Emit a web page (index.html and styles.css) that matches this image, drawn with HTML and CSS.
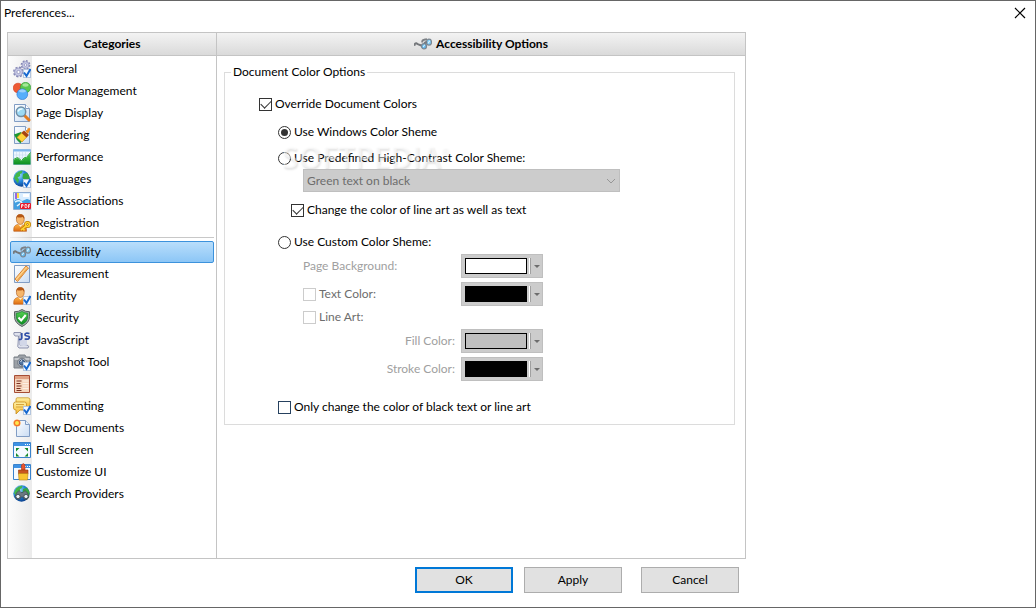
FILE: index.html
```html
<!DOCTYPE html>
<html lang="en">
<head>
<meta charset="utf-8">
<title>Preferences</title>
<link rel="stylesheet" href="styles.css">
</head>
<body>
<svg class="defs" width="0" height="0" aria-hidden="true">
  <defs>
    <linearGradient id="g-page" x1="0" y1="0" x2="1" y2="1"><stop offset="0" stop-color="#ffffff"/><stop offset="1" stop-color="#c9dcf3"/></linearGradient>
    <linearGradient id="g-orange" x1="0" y1="0" x2="0" y2="1"><stop offset="0" stop-color="#ffb648"/><stop offset="1" stop-color="#dc6a10"/></linearGradient>
    <linearGradient id="g-yellow" x1="0" y1="0" x2="0" y2="1"><stop offset="0" stop-color="#fff3a8"/><stop offset="1" stop-color="#f4b52c"/></linearGradient>
    <linearGradient id="g-green" x1="0" y1="0" x2="0" y2="1"><stop offset="0" stop-color="#55cf52"/><stop offset="1" stop-color="#0c8d20"/></linearGradient>
    <radialGradient id="g-globe" cx=".35" cy=".3" r=".75"><stop offset="0" stop-color="#9fe0ff"/><stop offset=".5" stop-color="#2787dc"/><stop offset="1" stop-color="#083b88"/></radialGradient>
    <symbol id="tick" viewBox="0 0 18 18"><rect x="10.500" y="9.500" width="7" height="8" fill="#f4f9ff" stroke="#b3c5dd"/><path d="M11 12.500l2.500 3.500L17.500 9" fill="none" stroke="#1668cf" stroke-width="2"/></symbol>
    <symbol id="page" viewBox="0 0 18 18"><path d="M1.500.5h11l4 4v13h-15z" fill="url(#g-page)" stroke="#819dc4"/><path d="M12.500.5v4h4" fill="#fff" stroke="#819dc4"/></symbol>
    <symbol id="globe" viewBox="0 0 18 18"><circle cx="8.500" cy="8.500" r="8.200" fill="url(#g-globe)"/><path d="M3 3.500Q6 .5 9.500.8l-.7 2.400L7 4l.2 2-2.700 1.500L6 9.500l-1 4L2.500 10 1 8z" fill="#43b649"/><path d="M10 4l4-1.300 2.500 4-.6 5-2.400 3-2-1.500.2-3.200L9.500 8z" fill="#36a841"/></symbol>
    <symbol id="person" viewBox="0 0 18 18"><path d="M.8 17.300c-.5-4.500 1-6.500 5.200-7.100l3 .3c3 .5 4.800 2.500 4.500 6.800z" fill="url(#g-orange)" stroke="#b85a16" stroke-width=".6"/><path d="M5 10l2.500 3L10 10z" fill="#fff1cf"/><ellipse cx="7.300" cy="5.400" rx="3.900" ry="5" fill="#f6b66a" stroke="#a9591c" stroke-width=".6"/><path d="M3.300 5Q2.800.4 7.200.3 12 .4 11.300 5L9.700 3Q6 4.200 4.300 3z" fill="#b45715"/></symbol>
    <symbol id="glasses" viewBox="0 0 18 18"><path d="M.8 10Q.6 8.200 2.300 8.300l2 1 3 1.200" fill="none" stroke="#74777b" stroke-width="1.900" stroke-linecap="round"/><path d="M8.300 7.500Q8 5 10 4.800l3-.6" fill="none" stroke="#7c8085" stroke-width="2"/><ellipse cx="10" cy="11.300" rx="2.500" ry="2.700" fill="#62baf0" stroke="#7c8690" stroke-width="1.200"/><ellipse cx="15" cy="7.200" rx="2.500" ry="3" fill="#7ccbf7" stroke="#7c8690" stroke-width="1.200"/><path d="M9.200 12l1.500-2.200M14.200 8.200l1.500-2.500" stroke="#dff5ff" stroke-width="1.100"/><path d="M10.300 8.300l2.500-1.500" stroke="#757b82" stroke-width="2.200"/></symbol>
    <symbol id="window" viewBox="0 0 18 18"><path d="M.5 1.500h17v15H.5z" fill="#f5faff" stroke="#3a83cc"/><path d="M1 2h16v3H1z" fill="#3e92e4"/><path d="M12 3.500h1m1 0h1m1 0h1" stroke="#fff"/></symbol>
  </defs>
</svg>

<div class="window">
  <header class="titlebar">
    <span class="title">Preferences...</span>
    <button class="close" type="button" aria-label="Close"><svg width="12" height="12" viewBox="0 0 12 12"><path d="M1 1l10 10M11 1L1 11" stroke="#000" stroke-width="1.200"/></svg></button>
  </header>

  <main class="content">
    <div class="panels">
      <nav class="categories" aria-label="Categories">
        <h2 class="panel-head">Categories</h2>
        <div class="category-list">
          <a class="item" href="#general"><svg class="icon" viewBox="0 0 18 18"><g fill="none" stroke="#8587b5"><circle cx="12.500" cy="5" r="3.900" stroke-width="2" stroke-dasharray="1.700 1.350"/><circle cx="5.500" cy="12" r="4.500" stroke-width="2" stroke-dasharray="2 1.530"/></g><g fill="#c8cae6" stroke="#9193bf" stroke-width=".7"><circle cx="12.500" cy="5" r="3.400"/><circle cx="5.500" cy="12" r="4"/></g><g fill="#fff" stroke="#8587b5" stroke-width=".7"><circle cx="12.500" cy="5" r="1.300"/><circle cx="5.500" cy="12" r="1.600"/></g><use href="#tick"/></svg>General</a>
          <a class="item" href="#color"><svg class="icon" viewBox="0 0 18 18"><circle cx="5" cy="6" r="4.800" fill="#ee5a34" stroke="#d23c1b" stroke-width=".6"/><circle cx="12.500" cy="5.500" r="5.200" fill="#5bc84f" stroke="#2d9a2f" stroke-width=".6"/><circle cx="9.300" cy="12.200" r="5.400" fill="#55aefb" stroke="#2371cf" stroke-width=".6"/><path d="M5.200 9Q9 5.300 13.500 9q-3.500 3-8.300 0z" fill="#b8e0fb" opacity=".7"/><ellipse cx="12.500" cy="3" rx="3" ry="1.700" fill="#c5f3b7" opacity=".7"/></svg>Color Management</a>
          <a class="item" href="#display"><svg class="icon" viewBox="0 0 18 18"><use href="#page"/><path d="M11 11l5 5" stroke="#e27a20" stroke-width="3" stroke-linecap="round"/><circle cx="8" cy="7.800" r="4.700" fill="#9cdaf6" stroke="#708da5" stroke-width="1.500"/><path d="M5 7.500Q6 4.500 9.500 5" fill="none" stroke="#effbff" stroke-width="1.500"/></svg>Page Display</a>
          <a class="item" href="#rendering"><svg class="icon" viewBox="0 0 18 18"><use href="#page"/><path d="M1 8.500L8 6l3 5-3.500 6.500Q3 14 1 8.500z" fill="#1b9831"/><path d="M4 11.500L9.500 6l4.700 4.500L9 16z" fill="#ffd33a" stroke="#d48b14" stroke-width=".7"/><path d="M8.500 7L11 4.500 16 9l-2.500 2.500z" fill="#a64413"/><path d="M12.500 5.500L16 1.500l1.500 1.500L15 8z" fill="#ef8a1d"/></svg>Rendering</a>
          <a class="item" href="#performance"><svg class="icon" viewBox="0 0 18 18"><path d="M.5 1.500h17v15H.5z" fill="#edf6ff" stroke="#9cbfe5"/><path d="M.5 1.500h17v2H.5z" fill="#7fb7ed"/><path d="M3.500 4v12M6.500 4v12M9.500 4v12M12.500 4v12M1 7h16M1 10h16" stroke="#c6daee" stroke-width=".6"/><path d="M.5 12l4-2 4 3 3-3 2 0L17.500 5v11.500H.5z" fill="url(#g-green)"/><path d="M.5 11.500l4-2 4 3 3-3h2l4-5" fill="none" stroke="#35a83b"/></svg>Performance</a>
          <a class="item" href="#languages"><svg class="icon" viewBox="0 0 18 18"><use href="#globe"/><use href="#tick"/></svg>Languages</a>
          <a class="item" href="#files"><svg class="icon" viewBox="0 0 18 18"><path d="M.5.5h17v17H.5z" fill="#d9edff" stroke="#8cabd1"/><path d="M3 1v6" stroke="#9a69dc" stroke-width="2"/><path d="M5 1v5" stroke="#ffde3f" stroke-width="2"/><path d="M10 2h6v3h-6z" fill="#fff"/><path d="M1 9q4-4 8 0l5-2 3 1v9H1z" fill="#419ee0"/><path d="M2 10q5-3 7 1M4 14l4-3" stroke="#e8f8ff" stroke-width="1.500" fill="none"/><rect x="7" y="11" width="11" height="6" rx="1" fill="#e7192c"/><path d="M8.500 16v-3.500h1.500V14H8.500M12 12.500v3h1.500l.5-1-.5-2zM15.500 16v-3.500H17M15.500 14H17" fill="none" stroke="#fff" stroke-width=".8"/></svg>File Associations</a>
          <a class="item" href="#registration"><svg class="icon" viewBox="0 0 18 18"><use href="#person"/><g fill="none" stroke="#b87600" stroke-width="3"><circle cx="14.500" cy="10.500" r="2"/><path d="M13 12l-5 4"/></g><g fill="none" stroke="#ffd130" stroke-width="1.700"><circle cx="14.500" cy="10.500" r="2"/><path d="M13 12l-5 4m2-1.500l1.500 2"/></g></svg>Registration</a>
          <hr class="divider">
          <a class="item selected" href="#accessibility" aria-current="page"><svg class="icon" viewBox="0 0 18 18"><use href="#glasses"/></svg>Accessibility</a>
          <a class="item" href="#measurement"><svg class="icon" viewBox="0 0 18 18"><path d="M1.500.5h15v17h-15z" fill="url(#g-page)" stroke="#819dc4"/><path d="M2 14L13 1l2.500 2L4.500 16.500z" fill="#ffcf85" stroke="#d98532"/><path d="M4.500 15L14 3.500" stroke="#e59b48"/></svg>Measurement</a>
          <a class="item" href="#identity"><svg class="icon" viewBox="0 0 18 18"><use href="#person"/><use href="#tick"/></svg>Identity</a>
          <a class="item" href="#security"><svg class="icon" viewBox="0 0 18 18"><path d="M9 .5q3.500 2.500 7.500 2.200v5Q16.500 14 9 17.500 1.500 14 1.500 7.700v-5Q5.500 3 9 .5z" fill="#9ea8a6" stroke="#596462"/><path d="M9 2.500q3 1.800 5.700 1.800v3.800Q14.700 12.700 9 15.500 3.300 12.700 3.300 8.100V4.300Q6 4.300 9 2.500z" fill="url(#g-green)" stroke="#087f24" stroke-width=".6"/><path d="M5.500 8.500l2.700 3 4.500-5.500" fill="none" stroke="#fff" stroke-width="2"/></svg>Security</a>
          <a class="item" href="#javascript"><svg class="icon" viewBox="0 0 18 18"><path d="M1 1.500h7L7 5v9q4-1 7 0 3 1 1 3H6q-2-1-1-4l.5-8H2q-2-2-1-3.500z" fill="#dfe2ed" stroke="#777d9e" stroke-width=".8"/><path d="M7 9h7v5q-3 1-7 0z" fill="#d2d7e8"/><path d="M8.800 2v5q0 2-3 1.300M16.500 2.500q-4.500-1-4.500 1 0 1.300 2.200 1.500 2.300.2 2.100 1.700-.1 2.100-4.700 1.300" fill="none" stroke="#304fa8" stroke-width="1.700"/></svg>JavaScript</a>
          <a class="item" href="#snapshot"><svg class="icon" viewBox="0 0 18 18"><path d="M1 4h4l1-2h6l1 2h4v11H1z" fill="#9ba0a6" stroke="#7b8087"/><path d="M1.500 5h15v2h-15z" fill="#c6c9cd"/><circle cx="9" cy="9.500" r="4.300" fill="#c9ced5" stroke="#6a717b"/><circle cx="9" cy="9.500" r="2.700" fill="#5275a2" stroke="#3c5273"/><path d="M7.500 8.500l1.500-1" stroke="#fff"/><use href="#tick"/></svg>Snapshot Tool</a>
          <a class="item" href="#forms"><svg class="icon" viewBox="0 0 18 18"><path d="M1.500.5h15v17h-15z" fill="#f6d5bd" stroke="#a64d35"/><path d="M2 1h14v3H2z" fill="#e0a183"/><path d="M3.500 6h5M3.500 8.500h4M3.500 11h5M3.500 13.500h4M3.500 15.500h5" stroke="#7a3021"/><path d="M9.500 6h6M9.500 8.500h6M9.500 11h6M9.500 13.500h6" stroke="#fdf0e6"/></svg>Forms</a>
          <a class="item" href="#commenting"><svg class="icon" viewBox="0 0 18 18"><path d="M4 .8h11q2 0 2 2v5q0 2-2 2H6q-3 0-3-2v-5q0-2 1-2z" fill="url(#g-yellow)" stroke="#c79324" stroke-width=".8"/><path d="M2.500 5h9q2 0 2 2v4q0 2-2 2H7l-4 4v-4q-2.500 0-2.500-2V7q0-2 2-2z" fill="url(#g-yellow)" stroke="#c58e20" stroke-width=".8"/><path d="M3 7.500h8M3 10h7" stroke="#d6a43b"/><use href="#tick"/></svg>Commenting</a>
          <a class="item" href="#newdocs"><svg class="icon" viewBox="0 0 18 18"><path d="M3.500 1.500h9l4 4v12h-13z" fill="url(#g-page)" stroke="#819dc4"/><path d="M12.500 1.500v4h4" fill="#e8f1fc" stroke="#819dc4"/><circle cx="4" cy="4" r="3.600" fill="#fbb25c"/><circle cx="4" cy="4" r="2.600" fill="#ffe84d" stroke="#f4702a" stroke-width="1.200"/></svg>New Documents</a>
          <a class="item" href="#fullscreen"><svg class="icon" viewBox="0 0 18 18"><use href="#window"/><path d="M3 7h3.500L3 10.500zM15 7h-3.500l3.500 3.500zM3 15.500h3.500L3 12zM15 15.500h-3.500L15 12z" fill="#178b2b"/></svg>Full Screen</a>
          <a class="item" href="#customize"><svg class="icon" viewBox="0 0 18 18"><use href="#window"/><path d="M8.500 7V2q2-3 3.500 0v5z" fill="#e7552d" stroke="#b23317" stroke-width=".6"/><path d="M5.500 7h9.500v4H5.500z" fill="#c95620" stroke="#93370f" stroke-width=".6"/><path d="M5.500 10.500h9.500l-.5 6.500H6z" fill="#f8c531" stroke="#b78315" stroke-width=".6"/></svg>Customize UI</a>
          <a class="item" href="#search"><svg class="icon" viewBox="0 0 18 18"><use href="#globe"/><path d="M3.500 8L6 5.500 8 7.500h2l2-2L14.500 8l1.500 4-2 2.500-3-.5-1-2H8l-1 2-3 .5L2 12z" fill="#6b7881" stroke="#39444c" stroke-width=".6"/><circle cx="5" cy="11.500" r="2.100" fill="#eef4f8" stroke="#39444c" stroke-width=".8"/><circle cx="13" cy="11.500" r="2.100" fill="#eef4f8" stroke="#39444c" stroke-width=".8"/></svg>Search Providers</a>
        </div>
      </nav>

      <section class="options">
        <h2 class="panel-head"><svg class="icon" viewBox="0 0 18 18"><use href="#glasses"/></svg>Accessibility Options</h2>
        <fieldset class="group">
          <legend>Document Color Options</legend>
          <div class="row first"><label class="choice"><input type="checkbox" checked>Override Document Colors</label></div>
          <div class="scheme">
            <div class="row"><label class="choice"><input type="radio" name="scheme" checked>Use Windows Color Sheme</label></div>
            <div class="row predefined">
              <label class="choice"><input type="radio" name="scheme">Use Predefined High-Contrast Color Sheme:</label>
              <span class="watermark" aria-hidden="true">SOFTPEDIA<small>®</small></span>
            </div>
            <div class="preset">
              <select aria-label="Predefined color scheme" disabled><option>Green text on black</option></select>
              <svg class="chevron" width="10" height="6" viewBox="0 0 10 6"><path d="M1 1l4 4 4-4" fill="none" stroke="#969696"/></svg>
            </div>
            <div class="row line-art"><label class="choice"><input type="checkbox" checked>Change the color of line art as well as text</label></div>
            <div class="row custom"><label class="choice"><input type="radio" name="scheme">Use Custom Color Sheme:</label></div>
            <div class="colors">
              <label class="dim" for="c-page">Page Background:</label>
              <button id="c-page" class="color" type="button" disabled><span class="swatch white"></span><span class="arrow"></span></button>
              <label class="choice off"><input type="checkbox" disabled>Text Color:</label>
              <button class="color" type="button" aria-label="Text color" disabled><span class="swatch black"></span><span class="arrow"></span></button>
            </div>
            <div class="art-label"><label class="choice off"><input type="checkbox" disabled>Line Art:</label></div>
            <div class="colors">
              <label class="dim end" for="c-fill">Fill Color:</label>
              <button id="c-fill" class="color" type="button" disabled><span class="swatch gray"></span><span class="arrow"></span></button>
              <label class="dim end" for="c-stroke">Stroke Color:</label>
              <button id="c-stroke" class="color" type="button" disabled><span class="swatch black"></span><span class="arrow"></span></button>
            </div>
            <div class="row only"><label class="choice"><input class="focus" type="checkbox">Only change the color of black text or line art</label></div>
          </div>
        </fieldset>
      </section>
    </div>

    <footer class="actions">
      <button class="btn primary" type="button">OK</button>
      <button class="btn" type="button">Apply</button>
      <button class="btn cancel" type="button">Cancel</button>
    </footer>
  </main>
</div>
</body>
</html>
```
FILE: styles.css
```css
* { box-sizing: border-box; }

body {
  margin: 0;
  background: #fff;
  color: #000;
  font: 12px/16px Lato, "Open Sans", sans-serif;
}

button, select, input { font: inherit; color: inherit; margin: 0; }
.defs { position: absolute; }

.window {
  min-height: 100vh;
  border: 1px solid #666;
}

.titlebar {
  display: flex;
  justify-content: space-between;
  align-items: center;
  height: 24px;
  padding: 0 9px 0 3px;
}
.close { display: flex; padding: 0; border: 0; background: none; }

.content { max-width: 745px; padding: 7px 0 0 6px; }

.panels {
  display: flex;
  min-height: 527px;
  border: 1px solid #c4c4c4;
}
.categories {
  flex: 0 0 209px;
  display: flex;
  flex-direction: column;
  border-right: 1px solid #c4c4c4;
}
.options { flex: 1; }

.panel-head {
  display: flex;
  justify-content: center;
  align-items: center;
  gap: 4px;
  height: 23px;
  margin: 0;
  border-bottom: 1px solid #c4c4c4;
  background: linear-gradient(#f3f3f3, #dadada);
  font-size: 12px;
}

.category-list {
  flex: 1;
  padding: 2px;
  background: linear-gradient(90deg, #fcfcfc, #ebebeb) 0 0 / 24px 100% no-repeat;
}
.item {
  display: flex;
  align-items: center;
  gap: 5px;
  height: 22px;
  padding: 0 3px;
  color: #000;
  text-decoration: none;
}
.icon { flex: none; width: 18px; height: 18px; }
.selected {
  padding: 0 2px;
  border: 1px solid #3c92dc;
  border-radius: 2px;
  background: linear-gradient(#b9defb, #8cc6f6);
}
.divider {
  height: 1px;
  margin: 3px 0;
  border: 0;
  background: linear-gradient(90deg, #eee, #c8c8c8 24px);
}

.group {
  margin: 8px 10px 0 7px;
  padding: 0 8px 6px 34px;
  border: 1px solid #dcdcdc;
}
.group legend { margin-left: -28px; padding: 0 2px; }

.row { display: flex; align-items: center; height: 22px; }
.first { margin: 13px 0 6px; }
.scheme { padding-left: 19px; }
.choice { display: inline-flex; align-items: center; gap: 3px; }

input {
  appearance: none;
  display: grid;
  place-content: center;
  width: 13px;
  height: 13px;
  border: 1px solid #333;
  background: #fff;
}
input[type="radio"] { border-radius: 50%; }
input[type="radio"]:checked::after {
  content: "";
  width: 7px;
  height: 7px;
  border-radius: 50%;
  background: #333;
}
input[type="checkbox"]:checked::after {
  content: "";
  width: 9px;
  height: 5px;
  margin-bottom: 3px;
  border: solid #333;
  border-width: 0 0 1px 1px;
  transform: rotate(-45deg);
}
input:disabled { border-color: #ccc; }
input.focus { border-color: #26415f; }

.predefined { position: relative; margin-top: 4px; }
.watermark {
  position: absolute;
  left: 4px;
  top: -2px;
  color: rgb(255 255 255 / 50%);
  font: 600 30px/24px "Open Sans", sans-serif;
  text-shadow: 1px 2px 2px rgb(0 0 0 / 10%);
  pointer-events: none;
}
.watermark small { font-size: 9px; vertical-align: 14px; line-height: 9px; }

.preset { position: relative; width: 317px; max-width: 100%; margin-left: 25px; }
.preset select {
  appearance: none;
  display: block;
  width: 100%;
  height: 23px;
  padding: 0 3px;
  border: 1px solid #bfbfbf;
  border-radius: 0;
  background: #ccc;
  color: #6d6d6d;
  opacity: 1;
}
.chevron { position: absolute; right: 4px; top: 9px; }

.line-art { margin: 7px 0 0 13px; }
.custom { margin-top: 10px; }

.colors {
  display: grid;
  grid-template-columns: 152px 82px;
  gap: 4px 6px;
  align-items: center;
  margin: 1px 0 0 25px;
}
.dim { color: #a0a0a0; }
.off { color: #6d6d6d; }
.end { text-align: right; }
.art-label { display: flex; align-items: center; height: 22px; margin-left: 25px; }
.color {
  display: flex;
  align-items: center;
  justify-content: space-between;
  height: 24px;
  padding: 0 0 0 3px;
  border: 1px solid #bfbfbf;
  background: #ccc;
}
.swatch { width: 62px; height: 16px; border: 1px solid #000; }
.white { background: #fff; }
.black { background: #000; }
.gray { background: #c0c0c0; }
.arrow {
  display: grid;
  place-content: center;
  width: 12px;
  height: 16px;
  border-left: 1px solid #a0a0a0;
  box-shadow: -1px 0 #fff;
}
.arrow::after {
  content: "";
  border: 3px solid transparent;
  border-top-color: #6d6d6d;
  border-bottom: 0;
}
.only { margin-top: 15px; }

.actions {
  display: flex;
  justify-content: flex-end;
  gap: 11px;
  padding: 8px 7px;
}
.btn {
  width: 98px;
  height: 26px;
  padding: 0;
  border: 1px solid #adadad;
  background: #e1e1e1;
}
.primary { border: 2px solid #0078d7; }
.cancel { margin-left: 8px; }
```
